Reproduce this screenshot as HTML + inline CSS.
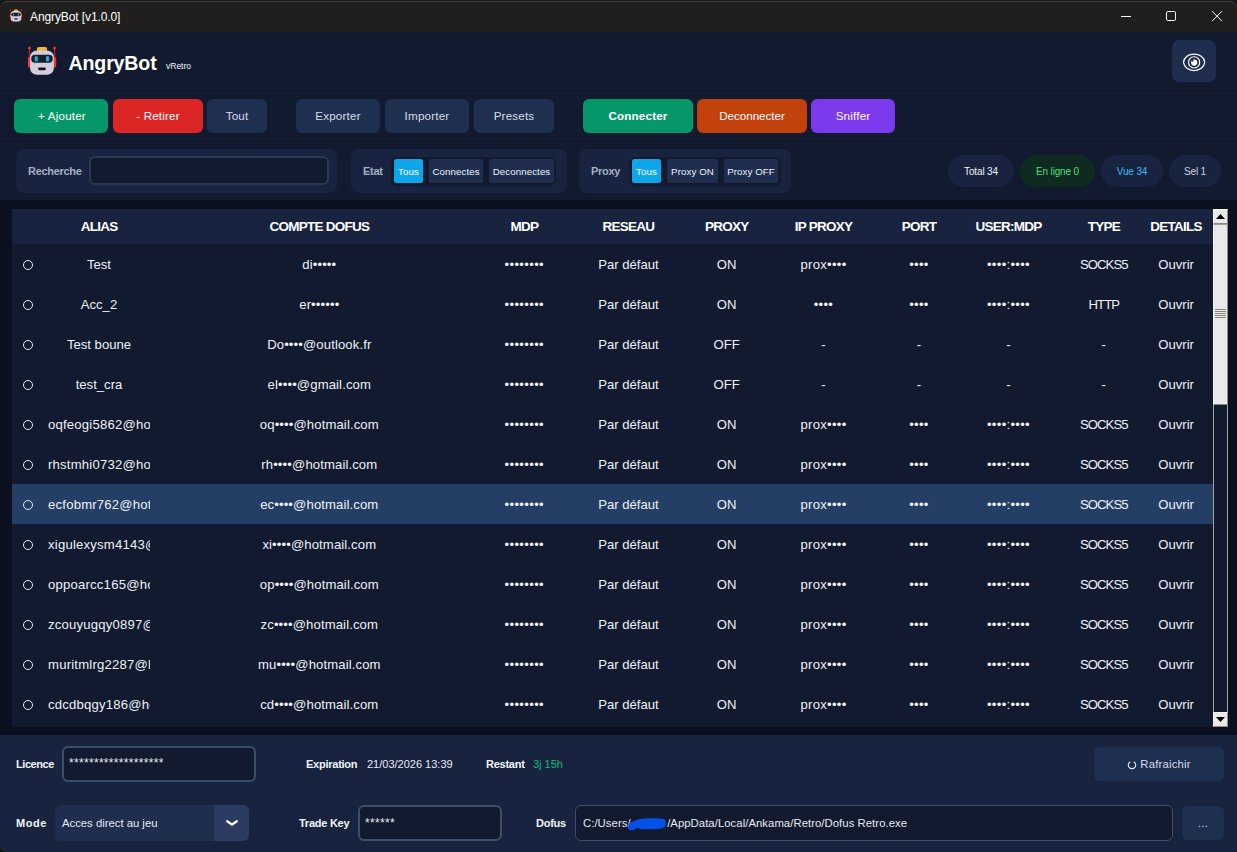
<!DOCTYPE html>
<html lang="fr"><head><meta charset="utf-8"><title>AngryBot [v1.0.0]</title>
<style>
*{box-sizing:border-box;margin:0;padding:0}
html,body{width:1237px;height:852px;overflow:hidden;background:#161616}
body{font-family:"Liberation Sans",sans-serif;color:#e8edf5;position:relative}
.win{position:absolute;left:0;top:0;width:1237px;height:852px;border-radius:8px 8px 3px 7px;overflow:hidden;background:#0a1020}
.win:before{content:"";position:absolute;left:0;top:0;width:1237px;height:1px;background:#1b1b1a;z-index:5}
.win:after{content:"";position:absolute;left:0;top:1px;right:0;bottom:0;border-radius:8px 8px 3px 7px;border-top:1px solid #3d3d3c;pointer-events:none;z-index:6}
.abs{position:absolute}
.tb{position:absolute;left:0;top:0;width:1237px;height:32px;background:#201f1d}
.tb .t{position:absolute;left:30px;top:10px;font-size:12px;line-height:15px;color:#fff;letter-spacing:-.1px}
.tb .ico{position:absolute;left:9px;top:9px;width:14px;height:13px}
.top{position:absolute;left:0;top:32px;width:1237px;height:168px;background:#111a2e}
.ln{position:absolute;left:0;width:1237px;height:1px;background:#0c1324}
.logo{position:absolute;left:27px;top:46px;width:30px;height:30px}
.brand{position:absolute;left:68.500px;top:51.200px;font-size:19.600px;line-height:24px;font-weight:700;color:#fff;letter-spacing:-.15px}
.ver{position:absolute;left:166px;top:61px;font-size:8.500px;line-height:10px;color:#f4f6fa}
.eye{position:absolute;left:1172px;top:40px;width:44px;height:42px;border-radius:7px;background:#1f2e4f}
.btn{position:absolute;top:99px;height:34px;border-radius:6px;font-size:11.600px;letter-spacing:.2px;line-height:34px;text-align:center;color:#d6dde8;background:#1e2f4f;white-space:nowrap;overflow:hidden}
.pan{position:absolute;top:149px;height:44px;border-radius:8px;background:#18243f}
.lbl{position:absolute;font-size:11px;font-weight:700;color:#a3b0c4;line-height:14px;letter-spacing:-.3px;white-space:nowrap}
.seg{position:absolute;top:157px;height:29px;border-radius:6px;background:#111a2e}
.chip{position:absolute;top:159px;height:24px;border-radius:2.500px;background:#1f2d4e;font-size:9.700px;letter-spacing:.1px;line-height:26.400px;text-align:center;color:#eef2f8;white-space:nowrap;overflow:hidden}
.chip.on{background:#0ea5e9;color:#fff}
.pill{position:absolute;top:155px;height:32px;border-radius:16px;background:#18243f;font-size:10px;line-height:34.200px;text-align:center;white-space:nowrap;letter-spacing:-.15px;overflow:hidden}
.inp{position:absolute;border:2px solid #3c4f6a;border-radius:6px;background:#111a2e}
.tbl{position:absolute;left:12px;top:209px;width:1201px;height:518px;background:#111a2e;overflow:hidden}
.th{position:absolute;left:0;top:0;width:1201px;height:35px;background:#18243f}
.hc{position:absolute;top:0;width:160px;margin-left:-12px;text-align:center;font-size:13.500px;font-weight:700;line-height:36.400px;color:#fff;letter-spacing:-.75px;white-space:nowrap}
.row{position:absolute;left:0;width:1201px;height:40px}
.row.sel{background:#253e66}
.c{position:absolute;top:1px;width:160px;margin-left:-12px;text-align:center;font-size:13.100px;line-height:40px;color:#eef2f8;white-space:nowrap}
.c.caps{letter-spacing:-.9px}
.c.b8{letter-spacing:.35px}
.c.cp{letter-spacing:.12px}
.c.bl{letter-spacing:.3px}
.al{position:absolute;left:36px;top:1px;width:102px;overflow:hidden;text-align:center;font-size:13.100px;line-height:40px;color:#eef2f8;white-space:nowrap}
.al.long{text-align:left;letter-spacing:.22px}
.rb{position:absolute;left:10.700px;top:15.600px;width:10px;height:10px;border:1.3px solid #e6ebf3;border-radius:50%}
.sb{position:absolute;left:1213px;top:209px;width:15px;height:518px;background:#111a2e;border-left:1px solid #a8a398;border-right:1px solid #a8a398}
.sbb{position:absolute;left:-1px;width:15px;background:#e9e9e9;border-left:1px solid #f6f4ef;border-right:1px solid #8e897d;border-bottom:1px solid #8e897d;border-top:1px solid #f6f4ef}
.foot{position:absolute;left:0;top:735px;width:1237px;height:117px;background:#18243f}
.fl{position:absolute;font-size:11px;font-weight:700;color:#f1f5f9;line-height:14px;letter-spacing:-.25px;white-space:nowrap}
.fv{position:absolute;font-size:11px;color:#e6ebf3;line-height:14px;white-space:nowrap}
</style></head><body>
<div class="win">
<div class="tb">
<svg class="ico" viewBox="0 0 30 30">
<line x1="2.450" y1="2.500" x2="2.100" y2="13" stroke="#e92c26" stroke-width="0.900"/>
<line x1="27.500" y1="2.500" x2="27.900" y2="13" stroke="#e92c26" stroke-width="0.900"/>
<circle cx="2.450" cy="2" r="1.500" fill="#f2302a"/><circle cx="27.500" cy="2" r="1.500" fill="#f2302a"/>
<rect x="0.900" y="11" width="3.600" height="10.400" rx="1.500" fill="#f0342e"/><rect x="25.500" y="11" width="3.700" height="10.400" rx="1.500" fill="#f0342e"/>
<rect x="10" y="1.100" width="10" height="4.600" rx="1.500" fill="#f6b32c"/>
<rect x="3" y="4.500" width="23.900" height="24.300" rx="6.800" fill="#d3cce1"/>
<rect x="4.150" y="8.700" width="21.650" height="8.100" rx="4.050" fill="#1d1e22"/>
<rect x="7.700" y="10.100" width="3.100" height="5.500" rx="1.500" fill="#12aef8"/><rect x="18.950" y="10.100" width="3.200" height="5.500" rx="1.500" fill="#12aef8"/>
<rect x="11.100" y="21.400" width="7.800" height="2.900" rx="1.450" fill="#121316"/>
</svg>
<div class="t">AngryBot [v1.0.0]</div>
<svg class="abs" style="left:1115px;top:5px" width="116" height="22" viewBox="0 0 116 22" fill="none" stroke="#fff" stroke-width="1"><path d="M6 11.5h10"/><rect x="51.5" y="6.5" width="9" height="9" rx="1.3"/><path d="M97 6.2l10 10M107 6.2l-10 10"/></svg>
</div>
<div class="top"></div>
<div class="ln" style="top:90px"></div><div class="ln" style="top:141px"></div>
<svg class="logo" viewBox="0 0 30 30">
<line x1="2.450" y1="2.500" x2="2.100" y2="13" stroke="#e92c26" stroke-width="0.900"/>
<line x1="27.500" y1="2.500" x2="27.900" y2="13" stroke="#e92c26" stroke-width="0.900"/>
<circle cx="2.450" cy="2" r="1.500" fill="#f2302a"/><circle cx="27.500" cy="2" r="1.500" fill="#f2302a"/>
<rect x="0.900" y="11" width="3.600" height="10.400" rx="1.500" fill="#f0342e"/><rect x="25.500" y="11" width="3.700" height="10.400" rx="1.500" fill="#f0342e"/>
<rect x="10" y="1.100" width="10" height="4.600" rx="1.500" fill="#f6b32c"/>
<rect x="3" y="4.500" width="23.900" height="24.300" rx="6.800" fill="#d3cce1"/>
<rect x="4.150" y="8.700" width="21.650" height="8.100" rx="4.050" fill="#1d1e22"/>
<rect x="7.700" y="10.100" width="3.100" height="5.500" rx="1.500" fill="#12aef8"/><rect x="18.950" y="10.100" width="3.200" height="5.500" rx="1.500" fill="#12aef8"/>
<rect x="11.100" y="21.400" width="7.800" height="2.900" rx="1.450" fill="#121316"/>
</svg>
<div class="brand">AngryBot</div><div class="ver">vRetro</div>
<div class="eye"><svg class="abs" style="left:10px;top:12px" width="24" height="20" viewBox="0 0 24 20" fill="none" stroke="#fff"><path d="M1.500 10.300C2 5.200 6.600 2.050 12.100 2.050S22.200 5.200 22.700 10.300C22.200 15.400 17.600 18.550 12.100 18.550S2 15.400 1.500 10.300z" stroke-width="1.200"/><circle cx="12.100" cy="10.350" r="5.600" stroke-width="1.150"/><circle cx="12.200" cy="10.600" r="3.100" fill="#fff" stroke="none"/><circle cx="10.500" cy="8.600" r="1.100" fill="#1f2e4f" stroke="none"/></svg></div>

<div class="btn" style="left:14px;width:94px;background:#059669;color:#fff;padding-left:2px">+ Ajouter</div>
<div class="btn" style="left:113px;width:90px;background:#dc2626;color:#fff">- Retirer</div>
<div class="btn" style="left:207px;width:60px">Tout</div>
<div class="btn" style="left:296px;width:84px">Exporter</div>
<div class="btn" style="left:385px;width:84px">Importer</div>
<div class="btn" style="left:474px;width:80px">Presets</div>
<div class="btn" style="left:583px;width:110px;background:#059669;color:#fff;font-weight:700">Connecter</div>
<div class="btn" style="left:697px;width:110px;background:#c2410c;color:#fff;letter-spacing:0">Deconnecter</div>
<div class="btn" style="left:811px;width:84px;background:#7c3aed;color:#fff">Sniffer</div>

<div class="pan" style="left:16px;width:321px"></div>
<div class="lbl" style="left:28px;top:164px">Recherche</div>
<div class="inp" style="left:89px;top:156px;width:240px;height:29px;border-color:#2a3851"></div>
<div class="pan" style="left:351px;width:216px"></div>
<div class="lbl" style="left:363px;top:164px">Etat</div>
<div class="seg" style="left:391px;width:165px"></div>
<div class="chip on" style="left:394px;width:29px">Tous</div>
<div class="chip" style="left:429px;width:54px">Connectes</div>
<div class="chip" style="left:489px;width:65px">Deconnectes</div>
<div class="pan" style="left:579px;width:212px"></div>
<div class="lbl" style="left:591px;top:164px">Proxy</div>
<div class="seg" style="left:629px;width:152px"></div>
<div class="chip on" style="left:632px;width:29px">Tous</div>
<div class="chip" style="left:667px;width:51px">Proxy ON</div>
<div class="chip" style="left:724px;width:54px">Proxy OFF</div>
<div class="pill" style="left:948px;width:66px;color:#f1f5f9">Total 34</div>
<div class="pill" style="left:1020px;width:75px;background:#0f2a1e;color:#4ade80">En ligne 0</div>
<div class="pill" style="left:1101px;width:62px;color:#38bdf8">Vue 34</div>
<div class="pill" style="left:1169px;width:52px;color:#cbd5e1">Sel 1</div>

<div class="tbl">
<div class="th"><div class="hc" style="left:19.2px">ALIAS</div><div class="hc" style="left:239.3px">COMPTE DOFUS</div><div class="hc" style="left:444.3px">MDP</div><div class="hc" style="left:548.5px">RESEAU</div><div class="hc" style="left:646.7px">PROXY</div><div class="hc" style="left:743.5px">IP PROXY</div><div class="hc" style="left:839.0px">PORT</div><div class="hc" style="left:928.5px">USER:MDP</div><div class="hc" style="left:1023.8px">TYPE</div><div class="hc" style="left:1096.1px">DETAILS</div></div>
<div class="abs" style="left:0;top:0;width:1201px;height:518px">
<div class="row" style="top:35px"><span class="rb"></span><div class="al">Test</div><div class="c cp" style="left:239.3px">di•••••</div><div class="c b8" style="left:444.3px">••••••••</div><div class="c " style="left:548.5px">Par défaut</div><div class="c " style="left:646.7px">ON</div><div class="c bl" style="left:743.5px">prox••••</div><div class="c bl" style="left:839.0px">••••</div><div class="c bl" style="left:928.5px">••••:••••</div><div class="c caps" style="left:1023.8px">SOCKS5</div><div class="c " style="left:1096.1px">Ouvrir</div></div>
<div class="row" style="top:75px"><span class="rb"></span><div class="al">Acc_2</div><div class="c cp" style="left:239.3px">er••••••</div><div class="c b8" style="left:444.3px">••••••••</div><div class="c " style="left:548.5px">Par défaut</div><div class="c " style="left:646.7px">ON</div><div class="c bl" style="left:743.5px">••••</div><div class="c bl" style="left:839.0px">••••</div><div class="c bl" style="left:928.5px">••••:••••</div><div class="c caps" style="left:1023.8px">HTTP</div><div class="c " style="left:1096.1px">Ouvrir</div></div>
<div class="row" style="top:115px"><span class="rb"></span><div class="al">Test boune</div><div class="c cp" style="left:239.3px">Do••••@outlook.fr</div><div class="c b8" style="left:444.3px">••••••••</div><div class="c " style="left:548.5px">Par défaut</div><div class="c " style="left:646.7px">OFF</div><div class="c " style="left:743.5px">-</div><div class="c " style="left:839.0px">-</div><div class="c " style="left:928.5px">-</div><div class="c " style="left:1023.8px">-</div><div class="c " style="left:1096.1px">Ouvrir</div></div>
<div class="row" style="top:155px"><span class="rb"></span><div class="al">test_cra</div><div class="c cp" style="left:239.3px">el••••@gmail.com</div><div class="c b8" style="left:444.3px">••••••••</div><div class="c " style="left:548.5px">Par défaut</div><div class="c " style="left:646.7px">OFF</div><div class="c " style="left:743.5px">-</div><div class="c " style="left:839.0px">-</div><div class="c " style="left:928.5px">-</div><div class="c " style="left:1023.8px">-</div><div class="c " style="left:1096.1px">Ouvrir</div></div>
<div class="row" style="top:195px"><span class="rb"></span><div class="al long">oqfeogi5862@hotmail.com</div><div class="c cp" style="left:239.3px">oq••••@hotmail.com</div><div class="c b8" style="left:444.3px">••••••••</div><div class="c " style="left:548.5px">Par défaut</div><div class="c " style="left:646.7px">ON</div><div class="c bl" style="left:743.5px">prox••••</div><div class="c bl" style="left:839.0px">••••</div><div class="c bl" style="left:928.5px">••••:••••</div><div class="c caps" style="left:1023.8px">SOCKS5</div><div class="c " style="left:1096.1px">Ouvrir</div></div>
<div class="row" style="top:235px"><span class="rb"></span><div class="al long">rhstmhi0732@hotmail.com</div><div class="c cp" style="left:239.3px">rh••••@hotmail.com</div><div class="c b8" style="left:444.3px">••••••••</div><div class="c " style="left:548.5px">Par défaut</div><div class="c " style="left:646.7px">ON</div><div class="c bl" style="left:743.5px">prox••••</div><div class="c bl" style="left:839.0px">••••</div><div class="c bl" style="left:928.5px">••••:••••</div><div class="c caps" style="left:1023.8px">SOCKS5</div><div class="c " style="left:1096.1px">Ouvrir</div></div>
<div class="row sel" style="top:275px"><span class="rb"></span><div class="al long">ecfobmr762@hotmail.com</div><div class="c cp" style="left:239.3px">ec••••@hotmail.com</div><div class="c b8" style="left:444.3px">••••••••</div><div class="c " style="left:548.5px">Par défaut</div><div class="c " style="left:646.7px">ON</div><div class="c bl" style="left:743.5px">prox••••</div><div class="c bl" style="left:839.0px">••••</div><div class="c bl" style="left:928.5px">••••:••••</div><div class="c caps" style="left:1023.8px">SOCKS5</div><div class="c " style="left:1096.1px">Ouvrir</div></div>
<div class="row" style="top:315px"><span class="rb"></span><div class="al long">xigulexysm4143@hotmail.com</div><div class="c cp" style="left:239.3px">xi••••@hotmail.com</div><div class="c b8" style="left:444.3px">••••••••</div><div class="c " style="left:548.5px">Par défaut</div><div class="c " style="left:646.7px">ON</div><div class="c bl" style="left:743.5px">prox••••</div><div class="c bl" style="left:839.0px">••••</div><div class="c bl" style="left:928.5px">••••:••••</div><div class="c caps" style="left:1023.8px">SOCKS5</div><div class="c " style="left:1096.1px">Ouvrir</div></div>
<div class="row" style="top:355px"><span class="rb"></span><div class="al long">oppoarcc165@hotmail.com</div><div class="c cp" style="left:239.3px">op••••@hotmail.com</div><div class="c b8" style="left:444.3px">••••••••</div><div class="c " style="left:548.5px">Par défaut</div><div class="c " style="left:646.7px">ON</div><div class="c bl" style="left:743.5px">prox••••</div><div class="c bl" style="left:839.0px">••••</div><div class="c bl" style="left:928.5px">••••:••••</div><div class="c caps" style="left:1023.8px">SOCKS5</div><div class="c " style="left:1096.1px">Ouvrir</div></div>
<div class="row" style="top:395px"><span class="rb"></span><div class="al long">zcouyugqy0897@hotmail.com</div><div class="c cp" style="left:239.3px">zc••••@hotmail.com</div><div class="c b8" style="left:444.3px">••••••••</div><div class="c " style="left:548.5px">Par défaut</div><div class="c " style="left:646.7px">ON</div><div class="c bl" style="left:743.5px">prox••••</div><div class="c bl" style="left:839.0px">••••</div><div class="c bl" style="left:928.5px">••••:••••</div><div class="c caps" style="left:1023.8px">SOCKS5</div><div class="c " style="left:1096.1px">Ouvrir</div></div>
<div class="row" style="top:435px"><span class="rb"></span><div class="al long">muritmlrg2287@hotmail.com</div><div class="c cp" style="left:239.3px">mu••••@hotmail.com</div><div class="c b8" style="left:444.3px">••••••••</div><div class="c " style="left:548.5px">Par défaut</div><div class="c " style="left:646.7px">ON</div><div class="c bl" style="left:743.5px">prox••••</div><div class="c bl" style="left:839.0px">••••</div><div class="c bl" style="left:928.5px">••••:••••</div><div class="c caps" style="left:1023.8px">SOCKS5</div><div class="c " style="left:1096.1px">Ouvrir</div></div>
<div class="row" style="top:475px"><span class="rb"></span><div class="al long">cdcdbqgy186@hotmail.com</div><div class="c cp" style="left:239.3px">cd••••@hotmail.com</div><div class="c b8" style="left:444.3px">••••••••</div><div class="c " style="left:548.5px">Par défaut</div><div class="c " style="left:646.7px">ON</div><div class="c bl" style="left:743.5px">prox••••</div><div class="c bl" style="left:839.0px">••••</div><div class="c bl" style="left:928.5px">••••:••••</div><div class="c caps" style="left:1023.8px">SOCKS5</div><div class="c " style="left:1096.1px">Ouvrir</div></div>
</div>
</div>
<div class="sb">
<div class="sbb" style="top:0;height:15px"><svg class="abs" style="left:2px;top:4px" width="9" height="5" viewBox="0 0 9 5"><path d="M0 5L4.500 0L9 5z" fill="#000"/></svg></div>
<div class="sbb" style="top:15px;height:181px;border-top-color:#a39d90"><div class="abs" style="left:1px;top:84px;width:11px;height:9px;background:repeating-linear-gradient(#8c867a 0,#8c867a 1px,transparent 1px,transparent 2px)"></div></div>
<div class="sbb" style="top:503px;height:15px"><svg class="abs" style="left:2px;top:4px" width="9" height="5" viewBox="0 0 9 5"><path d="M0 0L4.500 5L9 0z" fill="#000"/></svg></div>
</div>

<div class="foot"></div>
<div class="fl" style="left:16px;top:757px;letter-spacing:-.45px">Licence</div>
<div class="inp" style="left:62px;top:746px;width:194px;height:36px"></div>
<div class="fv" style="left:69px;top:756.200px;font-size:12px;letter-spacing:.31px">*******************</div>
<div class="fl" style="left:306px;top:757px">Expiration</div>
<div class="fv" style="left:367px;top:757px">21/03/2026 13:39</div>
<div class="fl" style="left:486px;top:757px">Restant</div>
<div class="fv" style="left:533px;top:757px;color:#10b981">3j 15h</div>
<div class="btn" style="left:1094px;top:747px;width:130px;font-size:11.300px"><svg style="display:inline-block;vertical-align:-1.500px;margin-right:3px" width="10" height="10" viewBox="0 0 10 10" fill="none" stroke="#e6ebf3" stroke-width="1.100"><path d="M3.200 1.700A3.700 3.700 0 1 0 6.800 1.700"/></svg>Rafraichir</div>

<div class="fl" style="left:16px;top:816px;letter-spacing:.55px">Mode</div>
<div class="abs" style="left:55px;top:805px;width:194px;height:36px;border-radius:6px;background:#1f2d4e;overflow:hidden"><div class="abs" style="left:159px;top:0;width:35px;height:36px;background:#2b3b62"></div>
<svg class="abs" style="left:170px;top:12.500px" width="14" height="10" viewBox="0 0 14 10" fill="none" stroke="#fff" stroke-width="2.300" stroke-linecap="round" stroke-linejoin="round"><path d="M2.200 3.200l4.800 3.400 4.800-3.400"/></svg></div>
<div class="fv" style="left:62px;top:816px;font-size:11.300px">Acces direct au jeu</div>
<div class="fl" style="left:299px;top:816px">Trade Key</div>
<div class="inp" style="left:358px;top:805px;width:144px;height:36px"></div>
<div class="fv" style="left:365px;top:816px;font-size:12px;letter-spacing:.31px">******</div>
<div class="fl" style="left:536px;top:816px">Dofus</div>
<div class="inp" style="left:575px;top:805px;width:598px;height:36px;border-width:1px"></div>
<div class="fv" style="left:583px;top:816px;font-size:11.300px;letter-spacing:.06px">C:/Users/<span style="display:inline-block;width:36.500px"></span>/AppData/Local/Ankama/Retro/Dofus Retro.exe</div>
<svg class="abs" style="left:627px;top:817px" width="40" height="14" viewBox="0 0 40 14"><path d="M1 11C0 8 3 5 6 4.500C10 2 16 1.200 22 1.200C28 1 34 1.200 37 2C39.500 3 39.500 8 37.500 10C34 12 28 12.200 22 12C18 12.300 14 12.500 12 11.500C10 10.500 9 11.500 7 12.800C4 14 1.500 13 1 11z" fill="#0550e8"/></svg>
<div class="btn" style="left:1182px;top:806px;width:42px">...</div>
</div>
</body></html>
